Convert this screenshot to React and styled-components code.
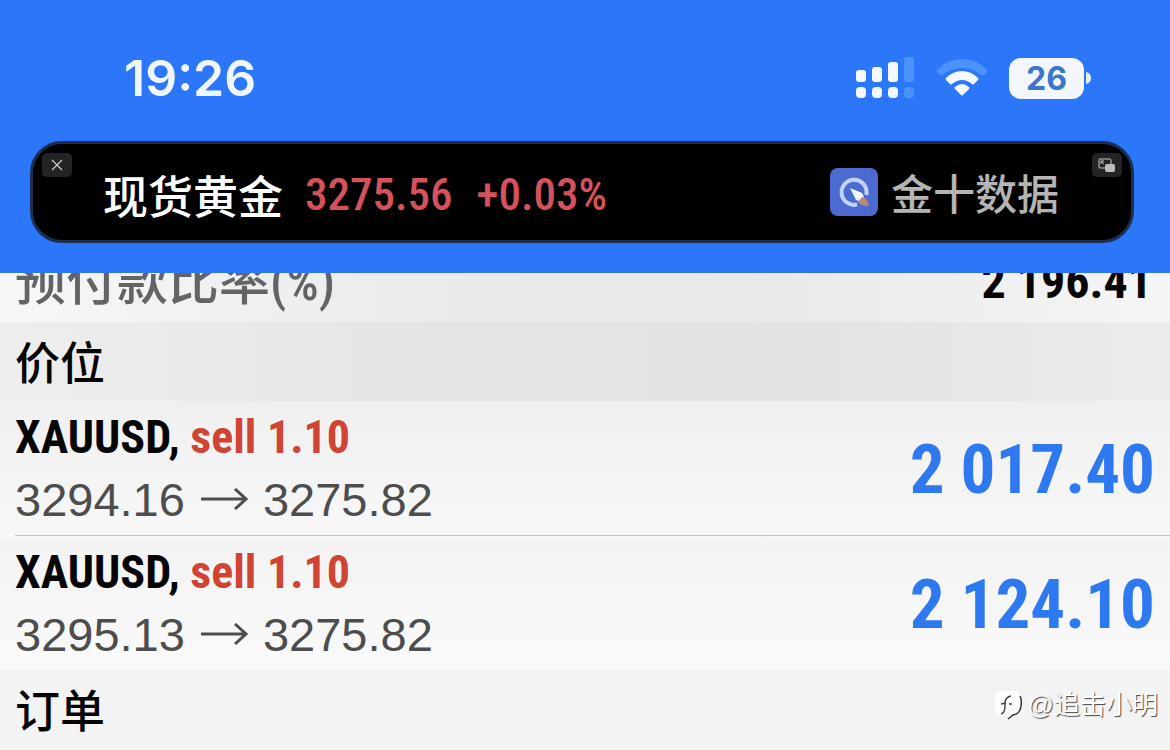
import React from "react";
import styled, { createGlobalStyle } from "styled-components";

const narrow = `"Roboto Condensed", Roboto, sans-serif`;
const latin = `"Liberation Sans", "Noto Sans CJK SC", sans-serif`;
const cjk = `"Noto Sans CJK SC", sans-serif`;

const GlobalStyle = createGlobalStyle`
  * { box-sizing: border-box; }
  body { margin: 0; background: #f5f5f5; font-family: ${latin}; overflow: hidden; }
  h2, p { margin: 0; }
`;

const Page = styled.div`
  position: relative;
  min-height: 100vh;
  overflow: hidden;
`;

const Header = styled.header`
  background: #2c76fa;
  padding: 46px 36px 30px 30px;
`;

const StatusBar = styled.div`
  display: flex;
  justify-content: space-between;
  align-items: center;
  height: 64px;
  padding: 0 43px 0 94px;
  margin-bottom: 31px;
`;

const Clock = styled.time`
  font: 600 50px/64px Inter, sans-serif;
  color: #f0f6ff;
`;

const StatusIcons = styled.div`
  display: flex;
  align-items: center;
  gap: 21px;
`;

const Battery = styled.div`
  display: flex;
  align-items: center;
  gap: 2px;
`;

const BatteryBody = styled.span`
  width: 75px;
  border-radius: 12px;
  background: #f3f6fa;
  color: #3b76cc;
  text-align: center;
  font: 700 32px/41px Inter, sans-serif;
`;

const Ticker = styled.section`
  position: relative;
  display: flex;
  align-items: center;
  justify-content: space-between;
  height: 102px;
  padding: 0 72px 0 70px;
  background: #000;
  border: 3px solid #1c2f50;
  border-radius: 32px;
`;

const CornerButton = styled.button`
  position: absolute;
  top: 9px;
  ${(p) => p.$side}: 9px;
  display: flex;
  align-items: center;
  justify-content: center;
  width: 30px;
  height: 24px;
  padding: 0;
  border: 0;
  border-radius: 5px;
  background: #242424;
`;

const Quote = styled.div`
  display: flex;
  align-items: center;
  padding-top: 6px;
  color: #d4525c;
  font: 500 45px/60px ${narrow};
`;

const Instrument = styled.span`
  color: #fff;
  font: 500 45px/60px ${cjk};
  margin-right: 22px;
`;

const Price = styled.span`
  margin-right: 24px;
`;

const Source = styled.div`
  display: flex;
  align-items: center;
  gap: 13px;
  color: #b4b4b4;
  font: 500 42px/60px ${cjk};
`;

const MarginRow = styled.div`
  display: flex;
  justify-content: space-between;
  align-items: flex-end;
  height: 49px;
  padding: 0 18px 9px 15px;
  overflow: hidden;
  background: linear-gradient(90deg, #f6f8f8, #e9eaea 40%, #e9e9e9 65%, #f5f5f5);
`;

const MarginLabel = styled.span`
  color: #636565;
  font: 500 51px/68px ${cjk};
`;

const Unit = styled.span`
  font: 500 51px/60px ${narrow};
`;

const MarginValue = styled.span`
  color: #060606;
  font: 700 48px/62px ${narrow};
`;

const SectionTitle = styled.h2`
  padding: 9px 15px 10px;
  background: ${(p) => p.$fill};
  color: #050505;
  font: 500 45px/60px ${cjk};
`;

const Positions = styled.div`
  background: linear-gradient(#f0f0f0, #f7f7f7 50%, #f3f3f3 52%, #fafafa);
`;

const Position = styled.article`
  display: flex;
  align-items: center;
  justify-content: space-between;
  height: 134px;
  margin-left: 15px;
  padding: 2px 15px 2px 0;
  & + & { border-top: 1px solid #c2c2c2; height: 135px; }
`;

const Deal = styled.p`
  color: #060606;
  font: 700 46px/63px ${narrow};
`;

const Side = styled.span`
  color: #d04434;
`;

const Route = styled.p`
  display: flex;
  align-items: center;
  gap: 15px;
  color: #4d4d4d;
  font: 400 47px/61px "Liberation Sans", sans-serif;
`;

const Profit = styled.strong`
  padding-top: 4px;
  color: #2e79f0;
  font: 700 69px/80px ${narrow};
`;

const Watermark = styled.div`
  position: absolute;
  right: 12px;
  bottom: 27px;
  display: flex;
  align-items: center;
  gap: 5px;
  color: #fff;
  font: 400 26px/36px ${latin};
  text-shadow: 1px 1px 1px #444;
`;

const Signal = () => (
  <svg width="60" height="42" viewBox="0 0 60 42" fill="#f4f8ff" aria-label="信号">
    <rect x="1" y="13" width="10" height="12" rx="3" />
    <rect x="17" y="10" width="10" height="15" rx="3" />
    <rect x="33" y="5" width="10" height="20" rx="3" />
    <rect x="49" y="0" width="10" height="25" rx="3" fill="#4b92fc" />
    <rect x="1" y="30" width="10" height="11" rx="4" />
    <rect x="17" y="30" width="10" height="11" rx="4" />
    <rect x="33" y="30" width="10" height="11" rx="4" />
    <rect x="49" y="30" width="10" height="11" rx="4" fill="#4b92fc" />
  </svg>
);

const Wifi = () => (
  <svg width="52" height="38" viewBox="0 0 52 38" aria-label="无线网络">
    <path d="M1 11Q11 0 26 0T51 11Q52 12 51 13L48 16Q47 17 45 16Q37 9 26 9T7 16Q5 17 4 16L1 13Q0 12 1 11Z" fill="#4b92fc" />
    <path d="M10 19Q17 12 26 12T42 19Q43 20 42 21L38 25Q37 26 36 25Q31 21 26 21T16 25Q15 26 14 25L10 21Q9 20 10 19Z" fill="#f4f8ff" />
    <path d="M19 28Q26 22 33 28Q34 29 33 30L27 36Q26 37 25 36L19 30Q18 29 19 28Z" fill="#f4f8ff" />
  </svg>
);

const SourceLogo = () => (
  <svg width="48" height="48" viewBox="0 0 48 48" aria-hidden="true">
    <rect width="48" height="48" rx="8" fill="#4c6bd0" />
    <path d="M27 36.500A12.500 12.500 0 1 1 36.300 27" fill="none" stroke="#c3d2f8" strokeWidth="4" />
    <path d="M20 20L32 25L34 29L29 33L26 32Z" fill="#f2f6ff" />
    <path d="M32 29Q38 30 39 38Q31 38 28 34Z" fill="#b98a78" />
  </svg>
);

const Arrow = () => (
  <svg width="48" height="24" viewBox="0 0 48 24" fill="none" stroke="#4d4d4d" strokeWidth="3" aria-label="至">
    <path d="M1 11H46M35 1L46 11L35 21" />
  </svg>
);

const positions = [
  { open: "3294.16", current: "3275.82", profit: "2 017.40" },
  { open: "3295.13", current: "3275.82", profit: "2 124.10" },
];

export default function App() {
  return (
    <Page>
      <GlobalStyle />
      <Header>
        <StatusBar>
          <Clock>19:26</Clock>
          <StatusIcons>
            <Signal />
            <Wifi />
            <Battery>
              <BatteryBody>26</BatteryBody>
              <svg width="5" height="14" viewBox="0 0 5 14" aria-hidden="true">
                <path d="M0 1Q5 2 5 7T0 13Z" fill="#e4eefc" />
              </svg>
            </Battery>
          </StatusIcons>
        </StatusBar>
        <Ticker>
          <CornerButton $side="left" aria-label="关闭">
            <svg width="12" height="12" viewBox="0 0 12 12" stroke="#c8c8c8" strokeWidth="1.300">
              <path d="M1 1L11 11M11 1L1 11" />
            </svg>
          </CornerButton>
          <Quote>
            <Instrument>现货黄金</Instrument>
            <Price>3275.56</Price>
            <span>+0.03%</span>
          </Quote>
          <Source>
            <SourceLogo />
            金十数据
          </Source>
          <CornerButton $side="right" aria-label="画中画">
            <svg width="18" height="14" viewBox="0 0 18 14" fill="none">
              <rect x="1" y="1" width="12" height="9" rx="1" stroke="#c8c8c8" />
              <path d="M3 6V3H6M3 3L6 6" stroke="#c8c8c8" />
              <rect x="7" y="6" width="10" height="8" rx="2" fill="#bdbdbd" />
            </svg>
          </CornerButton>
        </Ticker>
      </Header>
      <main>
        <MarginRow>
          <MarginLabel>预付款比率<Unit>(%)</Unit></MarginLabel>
          <MarginValue>2 196.41</MarginValue>
        </MarginRow>
        <SectionTitle $fill="linear-gradient(90deg, #eeeeee, #e4e4e4 40%, #e3e3e3 70%, #ececec)">价位</SectionTitle>
        <Positions>
          {positions.map((p) => (
            <Position key={p.open}>
              <div>
                <Deal>
                  XAUUSD, <Side>sell 1.10</Side>
                </Deal>
                <Route>
                  {p.open}
                  <Arrow />
                  {p.current}
                </Route>
              </div>
              <Profit>{p.profit}</Profit>
            </Position>
          ))}
        </Positions>
        <SectionTitle $fill="#f3f3f3">订单</SectionTitle>
      </main>
      <Watermark>
        <svg width="29" height="30" viewBox="0 0 29 30" fill="none" aria-hidden="true">
          <path d="M8 1H20Q27 1 27 9V17Q27 25 17 27L14 29V26H8Q1 26 1 18V8Q1 1 8 1Z" fill="#fff" />
          <path d="M7 24Q11 23 11 16V12Q12 7 17 6M7 14L12 13M15 14H18" stroke="#444" strokeWidth="1.500" />
          <path d="M26 6Q28 10 27 16Q26 24 19 25L14 29" stroke="#333" strokeWidth="1.500" />
        </svg>
        @追击小明
      </Watermark>
    </Page>
  );
}
